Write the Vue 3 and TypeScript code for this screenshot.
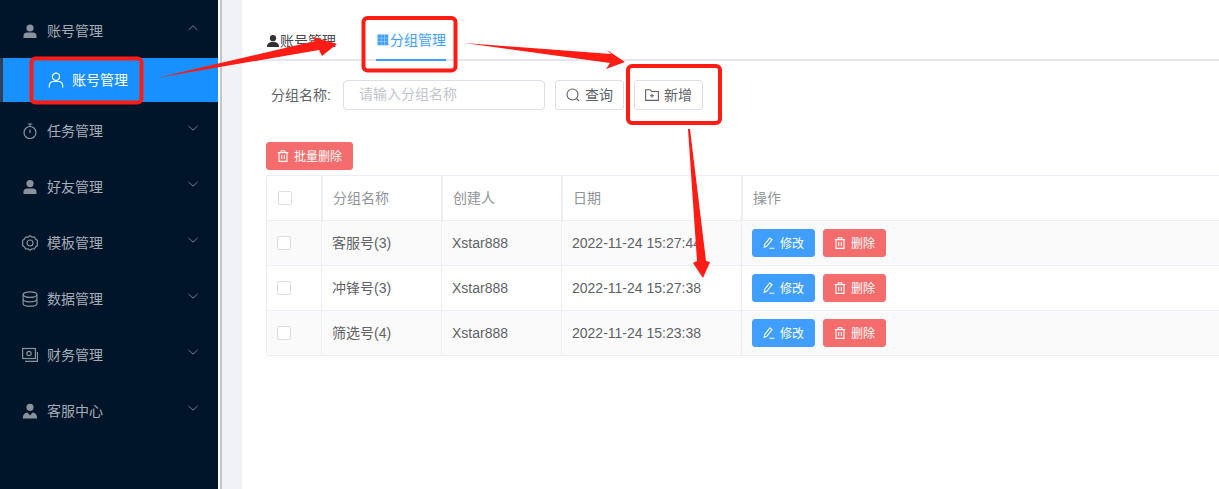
<script setup lang="ts">
interface MenuItem { label: string; icon: string; open?: boolean }
interface Row { name: string; creator: string; date: string }

const menuAfter: MenuItem[] = [
  { label: '任务管理', icon: 'timer' },
  { label: '好友管理', icon: 'user' },
  { label: '模板管理', icon: 'gear' },
  { label: '数据管理', icon: 'coin' },
  { label: '财务管理', icon: 'money' },
  { label: '客服中心', icon: 'service' },
]

const rows: Row[] = [
  { name: '客服号(3)', creator: 'Xstar888', date: '2022-11-24 15:27:44' },
  { name: '冲锋号(3)', creator: 'Xstar888', date: '2022-11-24 15:27:38' },
  { name: '筛选号(4)', creator: 'Xstar888', date: '2022-11-24 15:23:38' },
]
</script>

<template>
  <div class="page">
    <aside class="side">
      <div class="menu-item first">
        <svg class="mi" viewBox="0 0 16 16"><circle cx="8" cy="5" r="3.6" fill="currentColor" /><path d="M1.5 15v-2.2C1.500 10.500 3.500 9.600 5 9.600h6c1.500 0 3.500.9 3.500 3.200V15z" fill="currentColor" /></svg>
        <span class="ml">账号管理</span>
        <svg class="chev" viewBox="0 0 12 8"><path d="M1.500 6 6 1.800 10.500 6" /></svg>
      </div>
      <div class="sub-item">
        <svg class="si" viewBox="0 0 16 16"><circle cx="8" cy="4.800" r="3.600" /><path d="M1.300 15.500v-1.600c0-2.600 1.900-4.400 4.400-4.400h4.600c2.500 0 4.400 1.800 4.400 4.400v1.600" /></svg>
        <span class="cjk">账号管理</span>
      </div>
      <div v-for="m in menuAfter" :key="m.label" class="menu-item">
        <svg class="mi" viewBox="0 0 16 16">
          <g v-if="m.icon === 'timer'" fill="none" stroke="currentColor" stroke-width="1.200">
            <circle cx="8" cy="9.500" r="6" />
            <path d="M5.800 1h4.400M8 1v2.500M8 6.500v3.500" />
          </g>
          <g v-else-if="m.icon === 'user'" fill="currentColor">
            <circle cx="8" cy="4.600" r="3.600" />
            <path d="M1.500 15v-2.200C1.500 10.500 3.500 9.600 5 9.600h6c1.500 0 3.500.9 3.500 3.200V15z" />
          </g>
          <g v-else-if="m.icon === 'gear'" fill="none" stroke="currentColor" stroke-width="1.200">
            <path d="M8 .8l2 1.300 2.400-.1 1.100 2.100 2 1.300-.3 2.600.3 2.600-2 1.300-1.100 2.100-2.400-.1-2 1.300-2-1.300-2.400.1-1.100-2.100-2-1.300.3-2.600-.3-2.600 2-1.300L3.600 2 6 2.100z" />
            <circle cx="8" cy="8" r="3" />
          </g>
          <g v-else-if="m.icon === 'coin'" fill="none" stroke="currentColor" stroke-width="1.200">
            <ellipse cx="8" cy="3.600" rx="6.900" ry="2.800" />
            <path d="M1.100 3.600v8.800c0 1.600 3.100 2.800 6.900 2.800s6.900-1.200 6.900-2.800V3.600M1.100 8c0 1.600 3.100 2.800 6.900 2.800s6.900-1.200 6.900-2.800" />
          </g>
          <g v-else-if="m.icon === 'money'" fill="none" stroke="currentColor" stroke-width="1.200">
            <rect x=".6" y="1.500" width="12.800" height="10" />
            <circle cx="7" cy="6.500" r="2.200" />
            <path d="M3 14.400h12.400V5" />
          </g>
          <g v-else fill="currentColor">
            <circle cx="8" cy="4.300" r="3.600" />
            <path d="M.8 15.500c0-3.500 2-5.800 4.700-6l2.500 3 2.500-3c2.700.2 4.700 2.500 4.700 6z" />
          </g>
        </svg>
        <span class="ml">{{ m.label }}</span>
        <svg class="chev" viewBox="0 0 12 8"><path d="M1.500 2 6 6.200 10.500 2" /></svg>
      </div>
    </aside>

    <div class="rail"></div>

    <main class="main">
      <nav class="tabs">
        <div class="tab">
          <svg class="ti" viewBox="0 0 13 12"><circle cx="6" cy="3.200" r="3.100" fill="#303133" /><path d="M0 12c0-3.300 1.800-4.900 6-4.900s6 1.600 6 4.900z" fill="#303133" /></svg>
          <span class="cjk">账号管理</span>
        </div>
        <div class="tab active">
          <svg class="ti" viewBox="0 0 14 12" fill="#409eff">
            <rect x="1.500" y=".5" width="3.400" height="3.400" /><rect x="5.200" y=".5" width="3.400" height="3.400" /><rect x="8.900" y=".5" width="3.400" height="3.400" />
            <rect x="1.500" y="4.200" width="3.400" height="3.400" /><rect x="5.200" y="4.200" width="3.400" height="3.400" /><rect x="8.900" y="4.200" width="3.400" height="3.400" />
            <rect x="1.500" y="7.900" width="3.400" height="3.400" /><rect x="5.200" y="7.900" width="3.400" height="3.400" /><rect x="8.900" y="7.900" width="3.400" height="3.400" />
          </svg>
          <span class="cjk">分组管理</span>
        </div>
      </nav>

      <div class="filters">
        <label class="f-label cjk">分组名称:</label>
        <div class="input"><span class="cjk">请输入分组名称</span></div>
        <button class="btn plain query">
          <svg class="bi" viewBox="0 0 14 14" fill="none" stroke="currentColor" stroke-width="1.100"><circle cx="6.500" cy="6.500" r="5.500" /><path d="M10.500 10.500 13 13" /></svg>
          <span class="cjk">查询</span>
        </button>
        <button class="btn plain add">
          <svg class="bi" viewBox="0 0 14 14" fill="none" stroke="currentColor" stroke-width="1.100"><path d="M.6 12.400V1.800h4.600l1.500 1.700h6.700v8.900zM7 5.800v4M5 7.800h4" /></svg>
          <span class="cjk">新增</span>
        </button>
      </div>

      <button class="btn danger batch">
        <svg class="bi small" viewBox="0 0 12 12" fill="none" stroke="currentColor" stroke-width="1.100"><path d="M.8 2.600h10.400M4.200 2.500V.8h3.600v1.700M2 2.600v8.800h8V2.600M4.700 5v4M7.300 5v4" /></svg>
        <span class="cjk">批量删除</span>
      </button>

      <section class="table">
        <div class="tr head">
          <div class="td c0"><i class="check"></i></div>
          <div class="td c1"><span class="cjk">分组名称</span></div>
          <div class="td c2"><span class="cjk">创建人</span></div>
          <div class="td c3"><span class="cjk">日期</span></div>
          <div class="td c4"><span class="cjk">操作</span></div>
        </div>
        <div v-for="(r, i) in rows" :key="r.name" class="tr" :class="{ striped: i !== 1 }">
          <div class="td c0"><i class="check"></i></div>
          <div class="td c1"><span class="cjk">{{ r.name }}</span></div>
          <div class="td c2">{{ r.creator }}</div>
          <div class="td c3">{{ r.date }}</div>
          <div class="td c4 ops">
            <button class="btn primary op">
              <svg class="bi small" viewBox="0 0 12 12" fill="none" stroke="currentColor" stroke-width="1.100"><path d="M1.200 10.300 1.800 7.300 6.800 1l2.200 1.700-5 6.300zM6.500 11.300h4.800" /></svg>
              <span class="cjk">修改</span>
            </button>
            <button class="btn danger op">
              <svg class="bi small" viewBox="0 0 12 12" fill="none" stroke="currentColor" stroke-width="1.100"><path d="M.8 2.600h10.400M4.200 2.500V.8h3.600v1.700M2 2.600v8.800h8V2.600M4.700 5v4M7.300 5v4" /></svg>
              <span class="cjk">删除</span>
            </button>
          </div>
        </div>
      </section>
    </main>

    <svg class="annot" viewBox="0 0 1219 489" aria-hidden="true">
      <g fill="none" stroke="#ff1c14" stroke-width="4">
        <rect x="31.500" y="58.500" width="110" height="44" rx="4" />
        <rect x="363.500" y="18" width="92" height="52.500" rx="4" />
        <rect x="628" y="66" width="92" height="57" rx="4" />
      </g>
      <g fill="#ff1c14">
        <polygon points="156,78 315,41 313,37 337,44 322,56 319,50" />
        <polygon points="464,43 611,54 607,50 625,62 606,69 610,63" />
        <polygon points="688,129 690,129 706,261 710,262 703,278 693,263 697,261" />
      </g>
    </svg>
  </div>
</template>

<style>
html, body { margin: 0; background: #fff; }
</style>

<style scoped>
.page {
  position: relative;
  display: flex;
  width: 1219px;
  height: 489px;
  overflow: hidden;
  background: #fff;
  font-family: "Liberation Sans", "Noto Sans CJK SC", sans-serif;
  font-size: 14px;
  color: #606266;
}
.cjk, .ml {
  position: relative;
  top: -1px;
}
.side {
  flex: 0 0 218px;
  box-sizing: border-box;
  padding-top: 3px;
  background: #00142a;
}
.menu-item {
  display: flex;
  align-items: center;
  height: 56px;
  padding-left: 22px;
  color: #a5acb5;
}
.menu-item.first { height: 55px; }
.mi { width: 16px; height: 16px; color: #8a929c; flex: none; }
.ml { margin-left: 9px; }
.chev {
  width: 12px;
  height: 8px;
  margin-left: 84px;
  margin-top: -6px;
  fill: none;
  stroke: #737b86;
  stroke-width: 1;
}
.sub-item {
  display: flex;
  align-items: center;
  height: 44px;
  margin-bottom: 1px;
  padding-left: 45px;
  background: #1890ff;
  border-left: 3px solid #304156;
  color: #fff;
}
.si { width: 16px; height: 16px; margin-right: 8px; fill: none; stroke: #fff; stroke-width: 1.200; }
.rail {
  flex: 0 0 24px;
  box-sizing: border-box;
  background: #f0f2f5;
  border-left: 2px solid #fff;
}
.rail::before {
  content: "";
  display: block;
  width: 2px;
  height: 100%;
  background: #c4c6ca;
}
.main {
  flex: 1;
  min-width: 0;
  display: flex;
  flex-direction: column;
  align-items: flex-start;
}
.tabs {
  align-self: stretch;
  display: flex;
  height: 59px;
  padding-left: 25px;
  border-bottom: 2px solid #e4e7ed;
  box-sizing: content-box;
}
.tab {
  display: flex;
  align-items: center;
  height: 61px;
  box-sizing: border-box;
  padding-top: 21px;
  margin-right: 40px;
  color: #484a4e;
}
.tab.active {
  color: #409eff;
  border-bottom: 2px solid #409eff;
}
.ti { width: 13px; height: 12px; flex: none; }
.active .ti { width: 14px; }
.filters {
  display: flex;
  align-items: center;
  height: 30px;
  margin-top: 19px;
  padding-left: 29px;
}
.f-label { width: 72px; font-size: 14px; }
.input {
  box-sizing: border-box;
  width: 202px;
  height: 30px;
  line-height: 28px;
  padding-left: 15px;
  border: 1px solid #dcdfe6;
  border-radius: 4px;
  color: #c0c4cc;
  font-size: 14px;
}
.btn {
  display: inline-flex;
  align-items: center;
  justify-content: center;
  box-sizing: border-box;
  padding: 0;
  border-radius: 3px;
  font: inherit;
  cursor: pointer;
}
.plain {
  height: 30px;
  width: 69px;
  background: #fff;
  border: 1px solid #dcdfe6;
  color: #606266;
  font-size: 14px;
}
.query { margin-left: 10px; }
.add { margin-left: 10px; }
.bi { width: 14px; height: 14px; margin-right: 5px; flex: none; }
.bi.small { width: 12px; height: 12px; }
.danger {
  background: #f56c6c;
  border: 1px solid #f56c6c;
  color: #fff;
  font-size: 12px;
}
.primary {
  background: #409eff;
  border: 1px solid #409eff;
  color: #fff;
  font-size: 12px;
}
.batch {
  width: 87px;
  height: 28px;
  margin-top: 32px;
  margin-left: 24px;
}
.table {
  box-sizing: border-box;
  width: 977px;
  margin-top: 5px;
  margin-left: 24px;
  border-left: 1px solid #ebeef5;
  border-top: 1px solid #ebeef5;
  border-radius: 3px 0 0 3px;
}
.tr {
  display: grid;
  grid-template-columns: 54px 120px 120px 180px 1fr;
  height: 45px;
  box-sizing: border-box;
  border-bottom: 1px solid #ebeef5;
}
.tr.head {
  height: 45px;
  color: #909399;
  font-weight: 400;
}
.tr.striped { background: #fafafa; }
.td {
  display: flex;
  align-items: center;
  box-sizing: border-box;
  padding-left: 10px;
  border-left: 1px solid #ebeef5;
}
.head .td { border-left: 2px solid #ebeef5; }
.td.c0 { border-left: none; padding-left: 10px; }
.head .td.c0 { padding-left: 11px; }
.check {
  display: block;
  box-sizing: border-box;
  width: 14px;
  height: 14px;
  background: #fff;
  border: 1px solid #dcdfe6;
  border-radius: 2px;
}
.ops { gap: 8px; }
.op { width: 63px; height: 28px; }
.annot {
  position: absolute;
  left: 0;
  top: 0;
  width: 1219px;
  height: 489px;
  pointer-events: none;
}
</style>
